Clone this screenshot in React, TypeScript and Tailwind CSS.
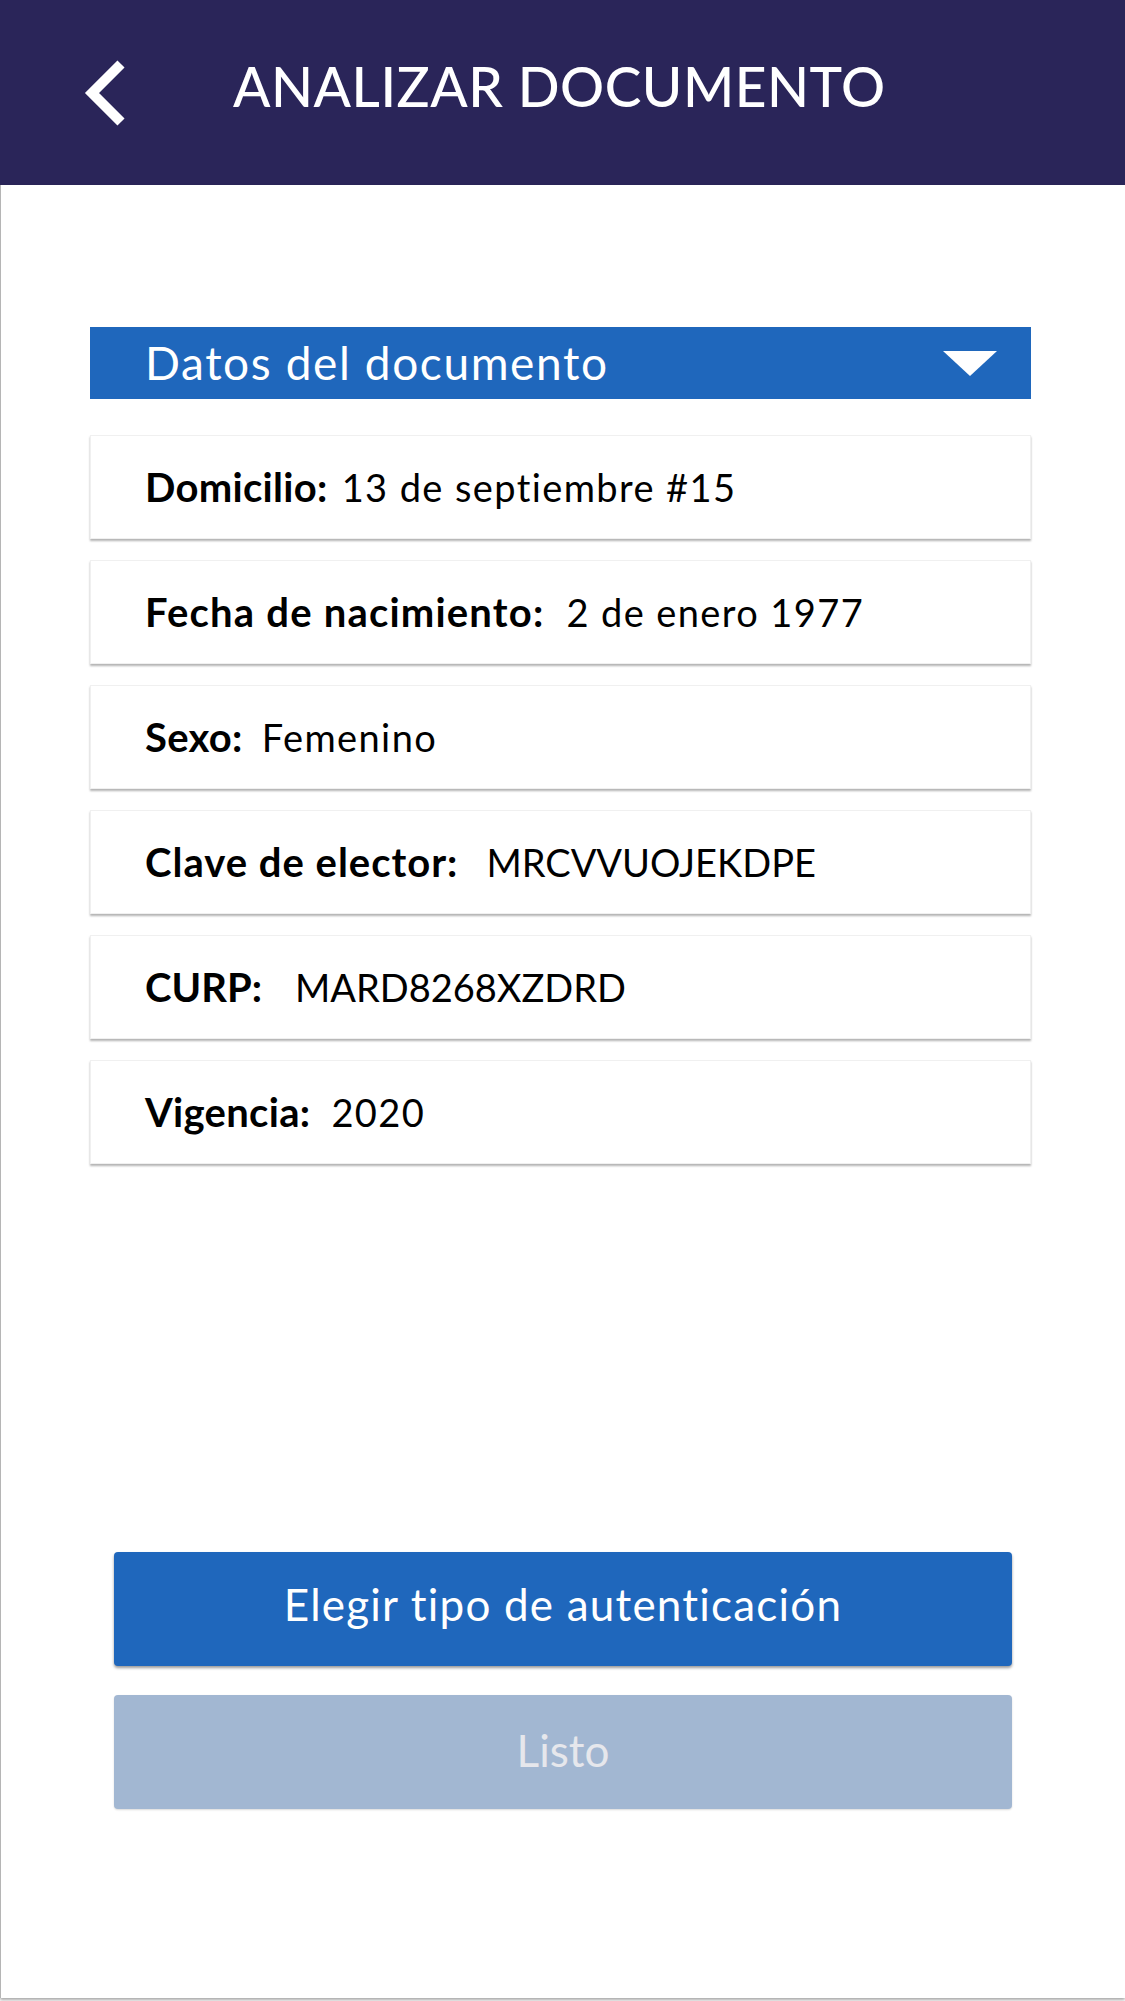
import React from "react";

const rows = [
  { label: "Domicilio:", value: "13 de septiembre #15", lt: "tracking-[0.3px]", vt: "ml-[14px] tracking-[1.4px]" },
  { label: "Fecha de nacimiento:", value: "2 de enero 1977", lt: "tracking-[1.2px]", vt: "ml-[22px] tracking-[1.4px]" },
  { label: "Sexo:", value: "Femenino", lt: "tracking-[0.3px]", vt: "ml-[19px] tracking-[1.4px]" },
  { label: "Clave de elector:", value: "MRCVVUOJEKDPE", lt: "tracking-[1px]", vt: "ml-[28px] tracking-[0px]" },
  { label: "CURP:", value: "MARD8268XZDRD", lt: "tracking-[0px]", vt: "ml-[33px] tracking-[0px]" },
  { label: "Vigencia:", value: "2020", lt: "tracking-[0.3px]", vt: "ml-[21px] tracking-[1.4px]" },
];

export default function App() {
  return (
    <div className="relative flex h-[2001px] w-full flex-col bg-white pb-[3px] font-['Lato',sans-serif] text-black">
      <header className="flex h-[185px] shrink-0 items-center bg-[#2a2559]">
        <svg className="ml-[84px] h-[70px] w-[44px]" viewBox="0 0 44 70" fill="none">
          <polyline points="37,6 8,35 37,64" stroke="white" strokeWidth="10" strokeLinecap="butt" strokeLinejoin="miter" />
        </svg>
        <h1 className="mb-[12px] ml-[105px] text-[55px] font-medium leading-none tracking-[0.5px] text-white">
          ANALIZAR DOCUMENTO
        </h1>
      </header>

      <main className="flex flex-1 flex-col border-l border-[#b5b5b5] shadow-[0_2px_3px_rgba(0,0,0,0.35)]">
        <div className="ml-[89px] mr-[94px] mt-[142px] flex h-[72px] items-center justify-between bg-[#1f67bc] pl-[55px] pr-[34px]">
          <span className="text-[46px] font-normal leading-none tracking-[1.6px] text-white">Datos del documento</span>
          <svg className="h-[25px] w-[54px]" viewBox="0 0 54 25">
            <polygon points="0,0 54,0 27,25" fill="white" />
          </svg>
        </div>

        <div className="ml-[89px] mr-[94px] mt-[36px] flex flex-col gap-[21px]">
          {rows.map((r) => (
            <div
              key={r.label}
              className="flex h-[104px] items-center border border-[#f0f0f0] bg-white pl-[54px] shadow-[0_2px_2px_rgba(0,0,0,0.3)]"
            >
              <span className={`${r.lt} text-[40px] font-bold leading-none`}>{r.label}</span>
              <span className={`${r.vt} text-[38px] font-normal leading-none`}>{r.value}</span>
            </div>
          ))}
        </div>

        <div className="ml-[113px] mr-[113px] mt-[388px] flex flex-col gap-[29px]">
          <button className="flex h-[114px] items-center justify-center rounded-[4px] bg-[#1f67bc] pb-[10px] text-[44px] font-normal tracking-[1.2px] text-white shadow-[0_2px_3px_rgba(0,0,0,0.4)]">
            Elegir tipo de autenticación
          </button>
          <button className="flex h-[114px] items-center justify-center rounded-[4px] bg-[#a2b7d2] pb-[4px] text-[44px] font-normal text-[#e6e7ec] shadow-[0_1px_2px_rgba(0,0,0,0.15)]">
            Listo
          </button>
        </div>
      </main>
    </div>
  );
}
